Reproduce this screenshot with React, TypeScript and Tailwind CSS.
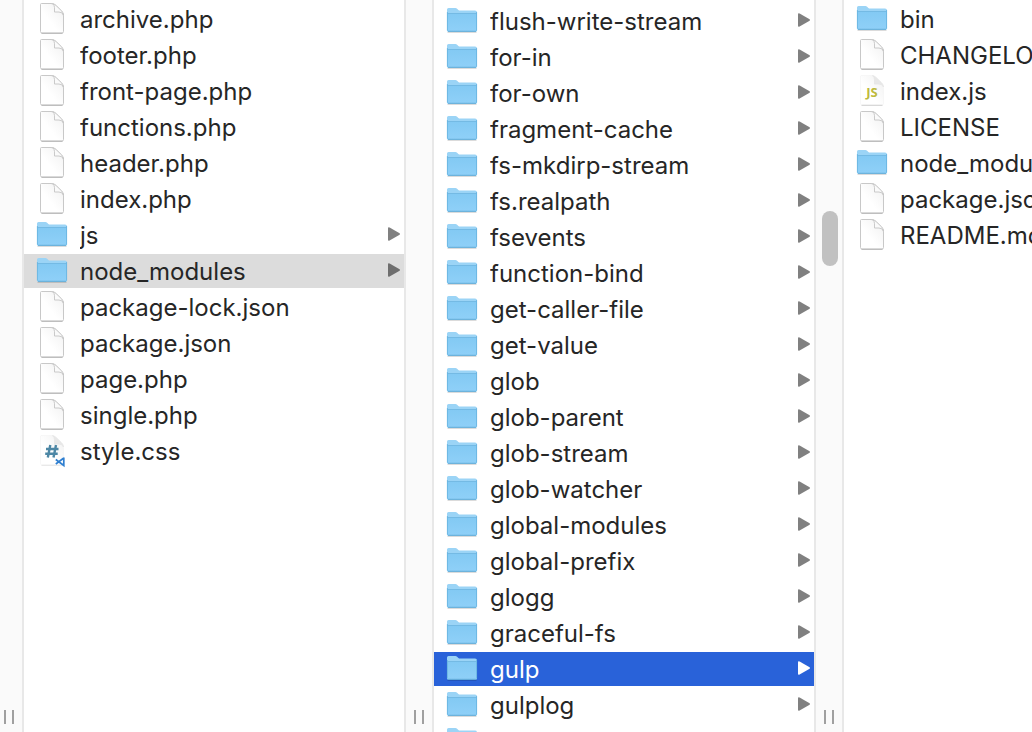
import { useState } from 'react';
import clsx from 'clsx';

type Kind = 'folder' | 'file' | 'css' | 'js';

interface Entry {
  name: string;
  kind: Kind;
}

const file = (name: string): Entry => ({ name, kind: 'file' });
const folder = (name: string): Entry => ({ name, kind: 'folder' });

const themeEntries: Entry[] = [
  file('archive.php'),
  file('footer.php'),
  file('front-page.php'),
  file('functions.php'),
  file('header.php'),
  file('index.php'),
  folder('js'),
  folder('node_modules'),
  file('package-lock.json'),
  file('package.json'),
  file('page.php'),
  file('single.php'),
  { name: 'style.css', kind: 'css' },
];

const moduleEntries: Entry[] = [
  'flush-write-stream',
  'for-in',
  'for-own',
  'fragment-cache',
  'fs-mkdirp-stream',
  'fs.realpath',
  'fsevents',
  'function-bind',
  'get-caller-file',
  'get-value',
  'glob',
  'glob-parent',
  'glob-stream',
  'glob-watcher',
  'global-modules',
  'global-prefix',
  'glogg',
  'graceful-fs',
  'gulp',
  'gulplog',
  'has',
].map(folder);

const gulpEntries: Entry[] = [
  folder('bin'),
  file('CHANGELOG.md'),
  { name: 'index.js', kind: 'js' },
  file('LICENSE'),
  folder('node_modules'),
  file('package.json'),
  file('README.md'),
];

function FolderIcon() {
  return (
    <svg width="32" height="28" viewBox="0 0 32 28" aria-hidden="true">
      <path d="M1.5 25.3h29" stroke="#000" strokeOpacity=".14" strokeWidth="1.4" />
      <path
        d="M1 2.500Q1 1 2.500 1h6.900q1 0 1.700.7l1.300 1.300q.6.600 1.600.600H29q2 0 2 2V10H1z"
        fill="#9bd4f6"
      />
      <path d="M1 6h30v17.200q0 1.500-1.500 1.500h-27Q1 24.700 1 23.200z" fill="url(#folderFront)" />
      <path d="M1.500 6.500h29" stroke="#74bae4" strokeWidth="1" />
      <path d="M1.400 5v18.600M30.600 5v18.600" stroke="#65b1dd" strokeWidth=".8" />
      <path d="M2 24.300h28" stroke="#5faad6" strokeWidth="1" />
    </svg>
  );
}

function FileIcon({ kind }: { kind: Kind }) {
  const plain = kind === 'file';
  return (
    <svg width="28" height="34" viewBox="0 1 28 34" aria-hidden="true">
      <path
        d="M3.500 2.500h9.500q3 0 5 2l5.500 5.500q2 2 2 5v15.500q0 1.500-1.500 1.500H4q-1.500 0-1.500-1.500v-27q0-1 1-1z"
        fill="url(#paper)"
        stroke={plain ? '#c8c8c8' : '#f3f3f3'}
        strokeWidth={plain ? 1 : 0.6}
      />
      <path
        d="M3.500 32.300h21"
        stroke={kind === 'css' ? '#e4e4e4' : kind === 'js' ? '#cfcfcf' : '#b4b4b4'}
        strokeWidth="1"
      />
      <path
        d="M14.500 2.600q2 1.400 2 3.900v4.500h4.500q3.500.2 4.500 3-.2-2.500-2-4.200L18 4.500q-1.600-1.600-3.500-1.900z"
        fill={plain ? '#fafafa' : '#e8e8e8'}
        stroke={plain ? '#c4c4c4' : '#e6e6e6'}
        strokeWidth=".9"
      />
      {kind === 'css' && (
        <>
          <path
            d="M12.300 12 9.800 24.500M18 12 15.500 24.500M8 16h12.500M7.200 20.800h12.500"
            stroke="#4d87a5"
            strokeWidth="2.400"
            fill="none"
          />
          <path d="M25.800 24.500v8l-8-6M25.800 25l-8 6" stroke="#2f7fd0" strokeWidth="1.700" fill="none" />
        </>
      )}
      {kind === 'js' && (
        <text
          x="14"
          y="24"
          textAnchor="middle"
          fontSize="13"
          fontWeight="700"
          fill="#bdb93c"
          className="font-['Open_Sans',sans-serif]"
        >
          JS
        </text>
      )}
    </svg>
  );
}

function Arrow() {
  return (
    <svg width="12" height="14" viewBox="0 0 12 14" aria-hidden="true">
      <path
        d="M0 1.200Q0-.4 1.600.4l9.600 5.500q1.600 1.100 0 2.200l-9.600 5.500Q0 14.400 0 12.800z"
        fill="currentColor"
      />
    </svg>
  );
}

interface ColumnProps {
  title: string;
  entries: Entry[];
  initial?: string;
  active?: boolean;
  arrows?: boolean;
  className: string;
}

function Column({ title, entries, initial, active, arrows, className }: ColumnProps) {
  const [selected, setSelected] = useState(initial);

  return (
    <ul aria-label={title} className={clsx('flex min-w-0 flex-col gap-0.5 overflow-hidden', className)}>
      {entries.map(({ name, kind }) => {
        const current = name === selected;
        return (
          <li key={name} className="shrink-0">
            <button
              type="button"
              onClick={() => setSelected(name)}
              className={clsx(
                'flex h-[34px] w-full items-start pl-3 text-left',
                current && active && 'bg-[#2962d9] text-white',
                current && !active && 'bg-[#dcdcdc]',
              )}
            >
              <span className="mr-3 flex h-[34px] w-8 shrink-0 items-center justify-center">
                {kind === 'folder' ? <FolderIcon /> : <FileIcon kind={kind} />}
              </span>
              <span className="min-w-0 flex-1 overflow-hidden whitespace-nowrap">{name}</span>
              {arrows && kind === 'folder' && (
                <span
                  className={clsx(
                    'flex h-8 shrink-0 items-center pr-1',
                    current && active ? 'text-white' : current ? 'text-[#6e6e6e]' : 'text-[#808080]',
                  )}
                >
                  <Arrow />
                </span>
              )}
            </button>
          </li>
        );
      })}
    </ul>
  );
}

interface GutterProps {
  first?: boolean;
  thumb?: boolean;
}

function Gutter({ first, thumb }: GutterProps) {
  return (
    <div
      className={clsx(
        'flex flex-col border-r-2 border-[#e8e8e8] bg-[#fafafa] pb-2',
        first ? 'pl-1' : 'border-l-2 pl-2',
      )}
    >
      {thumb && <div className="mt-[211px] -ml-0.5 h-[55px] w-4 rounded-full bg-[#c1c1c1]" />}
      <div className="mt-auto flex gap-1.5">
        <span className="h-3.5 w-0.5 bg-[#a0a0a0]" />
        <span className="h-3.5 w-0.5 bg-[#a0a0a0]" />
      </div>
    </div>
  );
}

export default function App() {
  return (
    <main className="grid h-screen grid-cols-[24px_minmax(0,380fr)_30px_minmax(0,380fr)_30px_minmax(0,188fr)] grid-rows-[minmax(0,1fr)] overflow-hidden bg-white font-[Inter,'Liberation_Sans',sans-serif] text-2xl leading-9 text-[#262626]">
      <svg width="0" height="0" className="absolute" aria-hidden="true">
        <defs>
          <linearGradient id="folderFront" x1="0" y1="0" x2="0" y2="1">
            <stop offset="0" stopColor="#82c9f3" />
            <stop offset="1" stopColor="#8fd0f8" />
          </linearGradient>
          <linearGradient id="paper" x1="1" y1="0" x2="0.400" y2="0.600">
            <stop offset="0" stopColor="#f0f0f0" />
            <stop offset="1" stopColor="#ffffff" />
          </linearGradient>
        </defs>
      </svg>
      <Gutter first />
      <Column title="theme" entries={themeEntries} initial="node_modules" arrows className="pt-0.5" />
      <Gutter />
      <Column title="node_modules" entries={moduleEntries} initial="gulp" active arrows className="pt-1" />
      <Gutter thumb />
      <Column title="gulp" entries={gulpEntries} className="pt-0.5" />
    </main>
  );
}
